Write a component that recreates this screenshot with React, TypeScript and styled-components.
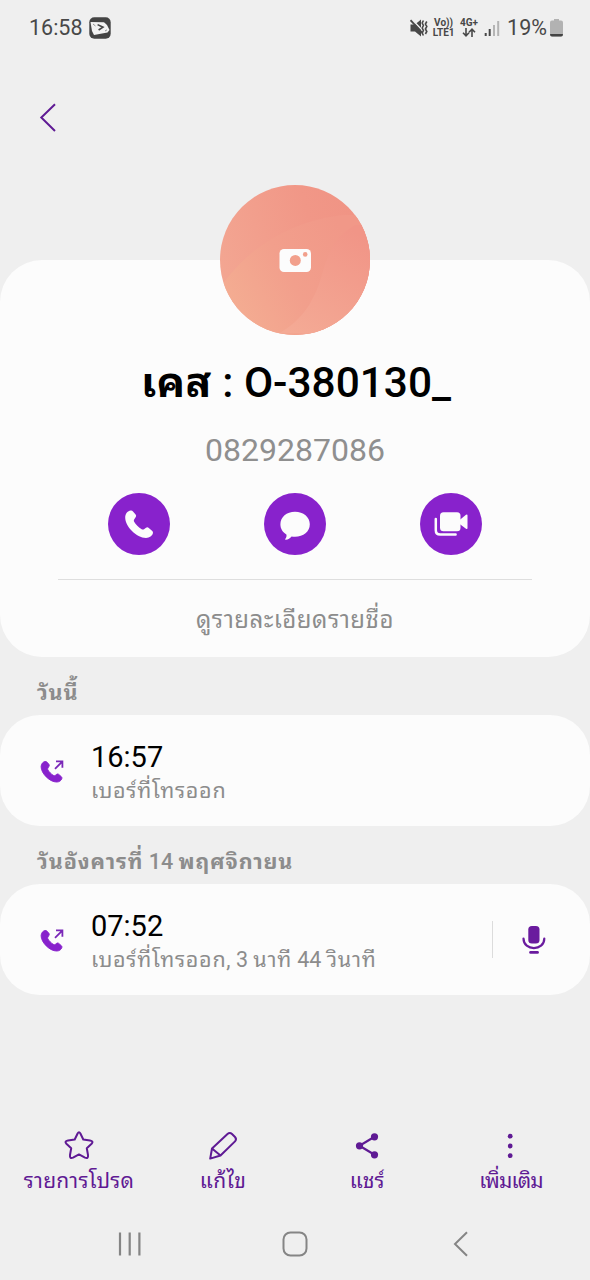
import React from "react";
import styled, { createGlobalStyle } from "styled-components";

const GlobalStyle = createGlobalStyle`
  * { box-sizing: border-box; }
  body { margin: 0; background: #efefef; }
`;

const purple = "#8822cc";
const deepPurple = "#5f1a94";

const Screen = styled.main`
  width: 590px;
  height: 1280px;
  display: flex;
  flex-direction: column;
  overflow: hidden;
  background: #efefef;
  color: #000;
  font-family: Roboto, "Noto Sans Thai Looped", Loma, Waree, Garuda, Umpush, FreeSans, "Noto Sans", sans-serif;

  svg { display: block; flex: none; }
`;

const StatusBar = styled.header`
  height: 56px;
  padding: 0 27px 0 29px;
  display: flex;
  align-items: center;
  justify-content: space-between;
  color: #484848;
  font-size: 21.5px;
  line-height: 56px;
`;

const StatusGroup = styled.div<{ $gap: number }>`
  display: flex;
  align-items: center;
  gap: ${(p) => p.$gap}px;
`;

const NetworkLabel = styled.div<{ $width: number }>`
  width: ${(p) => p.$width}px;
  height: 20px;
  display: flex;
  flex-direction: column;
  align-items: center;
  font-size: 10px;
  font-weight: 700;
  line-height: 10px;
  white-space: nowrap;
`;

const Toolbar = styled.nav`
  height: 204px;
  padding: 46px 38px;
`;

const ContactCard = styled.section`
  height: 397px;
  flex: none;
  display: flex;
  flex-direction: column;
  align-items: center;
  border-radius: 42px;
  background: #fcfcfc;
`;

const Avatar = styled.div`
  width: 150px;
  height: 150px;
  margin-top: -75px;
  border-radius: 50%;
  overflow: hidden;
  flex: none;
`;

const ContactName = styled.h1`
  margin: 17px 0 0;
  padding-left: 2px;
  font-size: 42.4px;
  font-weight: 500;
  line-height: 61px;
  white-space: pre;
`;

const Thai = styled.span<{ $tracking: number; $bold?: boolean }>`
  font-weight: ${(p) => (p.$bold ? 700 : "inherit")};
  letter-spacing: ${(p) => p.$tracking}px;
`;

const PhoneNumber = styled.p`
  margin: 17px 0 0;
  color: #8f8f8f;
  font-size: 32px;
  line-height: 40px;
`;

const Actions = styled.div`
  width: 374px;
  margin-top: 23px;
  display: flex;
  justify-content: space-between;
`;

const ActionButton = styled.button`
  width: 62px;
  height: 62px;
  padding: 0;
  border: 0;
  border-radius: 50%;
  background: ${purple};
`;

const Divider = styled.hr`
  width: 474px;
  height: 1px;
  margin: 24px 0 0;
  border: 0;
  background: #dedede;
`;

const DetailsLink = styled.a`
  margin-top: 20px;
  color: #8c8c8c;
  font-size: 24px;
  line-height: 40px;
`;

const DayHeading = styled.h2`
  height: 58px;
  margin: 0;
  padding: 8px 0 0 37px;
  flex: none;
  color: #8c8c8c;
  font-size: 21.5px;
  font-weight: 500;
  line-height: 56px;
  white-space: nowrap;
`;

const CallCard = styled.article`
  height: 111px;
  flex: none;
  display: flex;
  align-items: center;
  padding: 0 44px 0 39px;
  border-radius: 40px;
  background: #fcfcfc;
`;

const CallText = styled.div`
  flex: 1;
  padding: 4px 0 0 25px;
`;

const CallTime = styled.div`
  font-size: 29px;
  line-height: 36px;
`;

const CallDetail = styled.div`
  color: #8c8c8c;
  font-size: 21.5px;
  line-height: 32px;
  white-space: nowrap;
`;

const Recording = styled.div`
  height: 37px;
  padding-left: 28px;
  display: flex;
  align-items: center;
  border-left: 1px solid #dcdcdc;
`;

const BottomBar = styled.nav`
  height: 80px;
  margin-top: auto;
  padding: 0 7px;
  flex: none;
  display: grid;
  grid-template-columns: repeat(4, 1fr);
`;

const Tab = styled.div`
  display: flex;
  flex-direction: column;
  align-items: center;
  color: ${deepPurple};
  font-size: 21px;
  line-height: 36px;
  white-space: nowrap;
`;

const SystemNav = styled.footer`
  height: 73px;
  padding: 0 115px;
  flex: none;
  display: flex;
  align-items: center;
  justify-content: space-between;
`;

const handset =
  "M22.5 17.6 C20 18 17.3 20.5 17.2 24.5 C17.2 33.5 28.5 44.9 38 45 C41.5 45 44.3 42.8 44.9 40.3 C45.2 39.2 44.8 38.4 44 37.7 L40.8 34.9 C39.9 34 39 34 38 34.7 L36 36.2 C35.2 36.8 34.3 36.6 33.3 36 C30.3 34 28 31.6 26.3 28.9 C25.7 27.9 25.7 27.2 26.3 26.3 L27.6 24.3 C28.3 23.2 28.3 22.4 27.6 21.4 L25 18.4 C24.3 17.6 23.5 17.4 22.5 17.6 Z";

function OutgoingCall() {
  return (
    <svg width="27" height="26" viewBox="0 0 27 26">
      <path transform="translate(-10.8 -9.7) scale(.75)" d={handset} fill={purple} stroke={purple} strokeWidth="1.2" />
      <path d="M16 10.8 L23 3.8 M17 3.4 H23.4 V9.8" fill="none" stroke="#7a28b8" strokeWidth="1.8" />
    </svg>
  );
}

export default function App() {
  return (
    <Screen>
      <GlobalStyle />
      <StatusBar>
        <StatusGroup $gap={6}>
          <span>16:58</span>
          <svg width="22" height="22" viewBox="0 0 22 22">
            <rect x="0.3" y="0.3" width="21.4" height="21.4" rx="5" fill="#444" />
            <path d="M1.5 5 L15 5.2 L18 8 L20.5 13 L18.5 15.5 L5 18 L3 14 Z" fill="#f2f2f2" />
            <path d="M8.6 7.6 L14 10.2 L9.6 13" fill="none" stroke="#444" strokeWidth="1.6" />
            <path d="M4 7 L6.5 9 M16 14 L18 12.8" stroke="#777" strokeWidth=".8" />
          </svg>
        </StatusGroup>
        <StatusGroup $gap={5}>
          <svg width="18" height="20" viewBox="0 0 18 20">
            <path d="M0.5 6.5 H5 L11 1.5 V18.5 L5 13.5 H0.5 Z" fill="#484848" />
            <path d="M1.5 1 L13 13" stroke="#efefef" strokeWidth="1.6" />
            <path d="M0.5 2.2 L12.5 15" stroke="#484848" strokeWidth="1.8" />
            <path d="M13.4 2.5 L12.2 5 L13.4 7.5 L12.2 10 L13.4 12.5 L12.2 15 L13.4 17.5 M16.8 3.5 L15.4 6 L16.8 8.5 L15.4 11 L16.8 13.5 L15.4 16" fill="none" stroke="#484848" strokeWidth="1.6" />
          </svg>
          <NetworkLabel $width={21}>
            <span>Vo))</span>
            <span>LTE1</span>
          </NetworkLabel>
          <NetworkLabel $width={20}>
            <span>4G+</span>
            <svg width="14" height="9" viewBox="0 0 14 9">
              <path d="M4 0 V7.5 M1 4.8 L4 7.8 L7 4.8 M10 9 V1.5 M7 4.2 L10 1.2 L13 4.2" fill="none" stroke="#484848" strokeWidth="1.6" />
            </svg>
          </NetworkLabel>
          <StatusGroup $gap={6}>
            <svg width="17" height="17" viewBox="0 0 17 17">
              <path d="M1.7 13 V16 M5.7 9 V16" stroke="#484848" strokeWidth="2" />
              <path d="M10 5 V16 M14.2 1 V16" stroke="#b4b4b4" strokeWidth="2" />
            </svg>
            <StatusGroup $gap={3}>
              <span>19%</span>
              <svg width="13" height="18" viewBox="0 0 13 18">
                <path d="M4 0 H9 V1.6 H11 Q13 1.6 13 3.6 V15.5 Q13 17.5 11 17.5 H2 Q0 17.5 0 15.5 V3.6 Q0 1.6 2 1.6 H4 Z" fill="#b2b2b2" />
                <path d="M0 15 H13 Q13 17.5 11 17.5 H2 Q0 17.5 0 15 Z" fill="#444" />
              </svg>
            </StatusGroup>
          </StatusGroup>
        </StatusGroup>
      </StatusBar>

      <Toolbar>
        <svg width="20" height="32" viewBox="0 0 20 32">
          <path d="M17 2.2 L3.3 15.5 L17 29" fill="none" stroke={deepPurple} strokeWidth="2" />
        </svg>
      </Toolbar>

      <ContactCard>
        <Avatar>
          <svg width="150" height="150" viewBox="0 0 150 150">
            <defs>
              <linearGradient id="base" x1="0" y1=".6" x2="1" y2=".3">
                <stop offset="0" stopColor="#f3a692" />
                <stop offset=".65" stopColor="#f19787" />
                <stop offset="1" stopColor="#f09384" />
              </linearGradient>
              <linearGradient id="leaf" gradientUnits="userSpaceOnUse" x1="5" y1="115" x2="125" y2="50">
                <stop offset="0" stopColor="#f4ad92" />
                <stop offset=".5" stopColor="#f29f8c" />
                <stop offset="1" stopColor="#f19888" />
              </linearGradient>
              <linearGradient id="petal" gradientUnits="userSpaceOnUse" x1="75" y1="150" x2="140" y2="50">
                <stop offset="0" stopColor="#f4aa95" />
                <stop offset="1" stopColor="#f19587" />
              </linearGradient>
            </defs>
            <rect width="150" height="150" fill="url(#base)" />
            <path d="M0 103 C27 62 75 34 125 30 L150 30 V150 H0 Z" fill="url(#leaf)" />
            <path d="M60 148 C83 134 95 116 103 86 C110 62 118 50 135 40 H150 V150 Z" fill="url(#petal)" />
            <rect x="59.5" y="64" width="31.5" height="23" rx="4.5" fill="#fcfcfc" />
            <circle cx="75.3" cy="75.4" r="5.5" fill="#f2a08c" />
            <circle cx="85.2" cy="69.4" r="2.3" fill="#f2a08c" />
          </svg>
        </Avatar>
        <ContactName><Thai $bold $tracking={0.4}>เคส</Thai> : O-380130_</ContactName>
        <PhoneNumber>0829287086</PhoneNumber>
        <Actions>
          <ActionButton aria-label="โทร">
            <svg width="62" height="62" viewBox="0 0 62 62">
              <path d={handset} fill="#fcfcfc" />
            </svg>
          </ActionButton>
          <ActionButton aria-label="ข้อความ">
            <svg width="62" height="62" viewBox="0 0 62 62">
              <path d="M31 18.7 C39.4 18.7 45.8 24 45.8 31.3 C45.8 38.6 39.4 43.8 31 43.8 C29.6 43.8 28.8 43.7 27.6 43.5 C26 45.4 24.2 46.5 21.9 46.8 C21.1 46.9 21 46.4 21.4 45.8 C22.4 44.3 22.8 42.8 22.4 41.4 C18.7 39.3 16.4 35.7 16.4 31.3 C16.4 24 22.6 18.7 31 18.7 Z" fill="#fcfcfc" />
            </svg>
          </ActionButton>
          <ActionButton aria-label="วิดีโอคอล">
            <svg width="62" height="62" viewBox="0 0 62 62">
              <rect x="20" y="19.3" width="20.5" height="19" rx="3.5" fill="#fcfcfc" />
              <path d="M39 27.5 L46 21.8 Q47.5 20.8 47.5 22.5 V35 Q47.5 36.8 46 35.7 L39 30.5 Z" fill="#fcfcfc" />
              <path d="M15.8 26 V37.2 Q15.8 41.5 20.2 41.5 H35.6" fill="none" stroke="#fcfcfc" strokeWidth="2.5" strokeLinecap="round" />
            </svg>
          </ActionButton>
        </Actions>
        <Divider />
        <DetailsLink><Thai $tracking={0.5}>ดูรายละเอียดรายชื่อ</Thai></DetailsLink>
      </ContactCard>

      <DayHeading><Thai $bold $tracking={0.8}>วันนี้</Thai></DayHeading>
      <CallCard>
        <OutgoingCall />
        <CallText>
          <CallTime>16:57</CallTime>
          <CallDetail><Thai $tracking={0.7}>เบอร์ที่โทรออก</Thai></CallDetail>
        </CallText>
      </CallCard>

      <DayHeading>
        <Thai $bold $tracking={0.9}>วันอังคารที่</Thai> 14 <Thai $bold $tracking={0.9}>พฤศจิกายน</Thai>
      </DayHeading>
      <CallCard>
        <OutgoingCall />
        <CallText>
          <CallTime>07:52</CallTime>
          <CallDetail>
            <Thai $tracking={0.7}>เบอร์ที่โทรออก</Thai>, 3 <Thai $tracking={0.7}>นาที</Thai> 44 <Thai $tracking={0.7}>วินาที</Thai>
          </CallDetail>
        </CallText>
        <Recording>
          <svg width="25" height="30" viewBox="0 0 25 30">
            <rect x="7.3" y="1" width="11.2" height="17.6" rx="3.6" fill="#6a1b9e" />
            <path d="M2.5 13.5 C2.5 26.2 23.3 26.2 23.3 13.5" fill="none" stroke="#6a1b9e" strokeWidth="2.2" strokeLinecap="round" />
            <path d="M9.5 27.4 H16.6" stroke="#6a1b9e" strokeWidth="2.6" strokeLinecap="round" />
          </svg>
        </Recording>
      </CallCard>

      <BottomBar>
        <Tab>
          <svg width="32" height="36" viewBox="0 0 32 36">
            <path d="M14.6 6.5 Q16 4.2 17.4 6.5 L20.3 12.5 L27 13.5 Q31 14.2 28.6 16.8 L23.8 21.3 L25 28 Q25.5 32 22 30.6 L16 27.4 L10 30.6 Q6.5 32 7 28 L8.2 21.3 L3.4 16.8 Q1 14.2 5 13.5 L11.7 12.5 Z" fill="none" stroke={deepPurple} strokeWidth="2" strokeLinejoin="round" />
          </svg>
          <Thai $tracking={0.3}>รายการโปรด</Thai>
        </Tab>
        <Tab>
          <svg width="32" height="36" viewBox="0 0 32 36">
            <path d="M3.2 31.6 L5 21.5 L20.5 7 Q22.8 5 25 7 L28 10 Q30 12.2 28 14.4 L13.5 28.5 L3.2 31.6 Z M5 21.5 L13.5 28.5" fill="none" stroke={deepPurple} strokeWidth="2" strokeLinejoin="round" />
          </svg>
          <Thai $tracking={0.3}>แก้ไข</Thai>
        </Tab>
        <Tab>
          <svg width="32" height="36" viewBox="0 0 32 36">
            <path d="M23.5 9.8 L8.5 18.8 L23.5 27.8" fill="none" stroke={deepPurple} strokeWidth="2.2" />
            <circle cx="23.5" cy="9.8" r="3.6" fill={deepPurple} />
            <circle cx="8.5" cy="18.8" r="3.6" fill={deepPurple} />
            <circle cx="23.5" cy="27.8" r="3.6" fill={deepPurple} />
          </svg>
          <Thai $tracking={0}>แชร์</Thai>
        </Tab>
        <Tab>
          <svg width="32" height="36" viewBox="0 0 32 36">
            <circle cx="15.2" cy="9.2" r="2.4" fill={deepPurple} />
            <circle cx="15.2" cy="19" r="2.4" fill={deepPurple} />
            <circle cx="15.2" cy="28.7" r="2.4" fill={deepPurple} />
          </svg>
          <Thai $tracking={-0.8}>เพิ่มเติม</Thai>
        </Tab>
      </BottomBar>

      <SystemNav>
        <svg width="30" height="28" viewBox="0 0 30 28">
          <path d="M5 2.5 V25.5 M14.7 2.5 V25.5 M24.4 2.5 V25.5" stroke="#858585" strokeWidth="2.2" />
        </svg>
        <svg width="28" height="28" viewBox="0 0 28 28">
          <rect x="2.5" y="2.5" width="23" height="23" rx="7" fill="none" stroke="#858585" strokeWidth="2" />
        </svg>
        <svg width="30" height="28" viewBox="0 0 30 28">
          <path d="M22 2.2 L10 14 L22 25.8" fill="none" stroke="#858585" strokeWidth="2" />
        </svg>
      </SystemNav>
    </Screen>
  );
}
